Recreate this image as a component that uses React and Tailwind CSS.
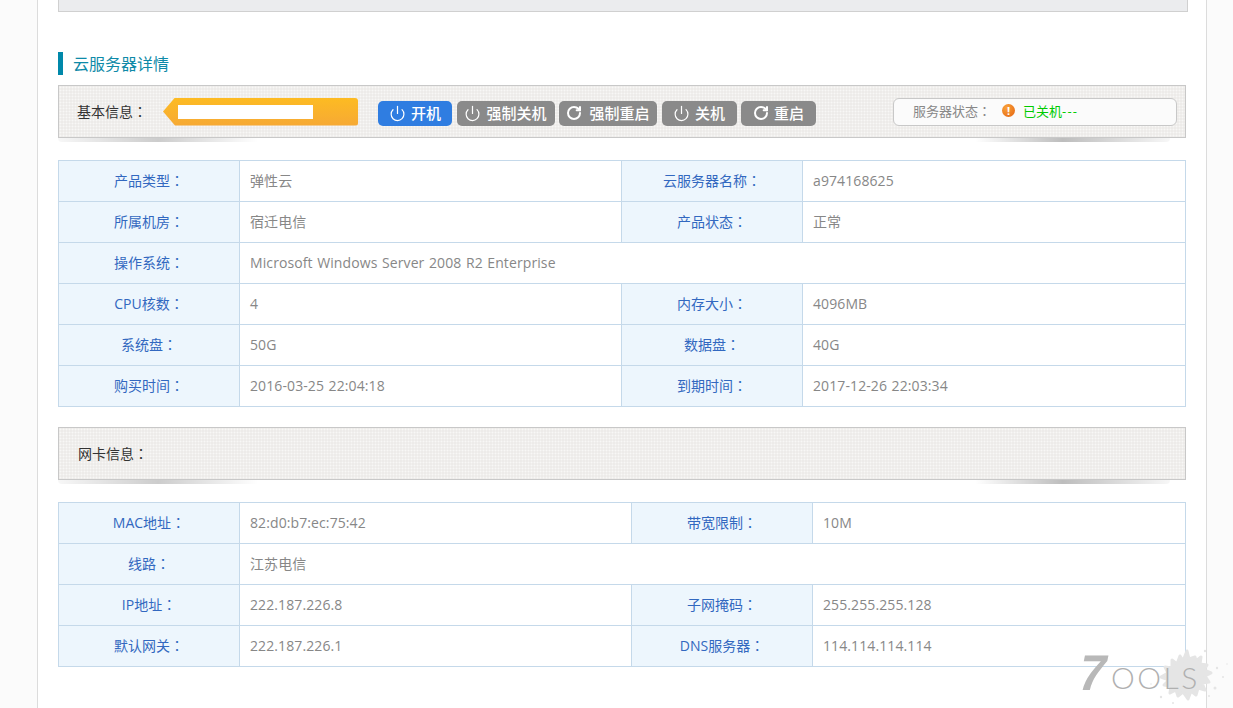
import React from 'react'
import { Power, RotateCw } from 'lucide-react'

const cjk = "font-['Open_Sans','Noto_Sans_CJK_SC',sans-serif]"
const paper = "border border-[#c8c8c8] bg-[#efedeb] bg-[image:radial-gradient(rgba(255,255,255,0.55)_0.8px,transparent_1.1px),radial-gradient(rgba(0,0,0,0.022)_0.8px,transparent_1.1px)] bg-[length:3px_3px] [background-position:0_0,1.5px_1.5px]"

const buttons = [
  { label: '开机', icon: 'power', active: true, width: 'w-[74px]', gap: 'gap-[5px]' },
  { label: '强制关机', icon: 'power', width: 'w-[98px]', gap: 'gap-[5px]' },
  { label: '强制重启', icon: 'restart', width: 'w-[98px]', gap: 'gap-[7px]' },
  { label: '关机', icon: 'power', width: 'w-[75px]', gap: 'gap-[5px]' },
  { label: '重启', icon: 'restart', width: 'w-[75px]', gap: 'gap-[5px]' },
]

// colon sits centred in the em box in the original, the TC face has that form
const Colon = () => <span className="font-['Noto_Sans_CJK_TC',sans-serif]">：</span>

const Shadow = () => (
  <div className="flex justify-between h-[7px]">
    <div className="w-[200px] h-[4px] rounded-bl-full bg-[linear-gradient(90deg,rgba(0,0,0,0.03),rgba(0,0,0,0.2)_50%,rgba(0,0,0,0))]"></div>
    <div className="w-[195px] h-[4px] mr-[16px] rounded-br-full bg-[linear-gradient(90deg,rgba(0,0,0,0),rgba(0,0,0,0.26)_45%,rgba(0,0,0,0.03))]"></div>
  </div>
)

const Label = ({ w, children }) => (
  <td className={`${w} border border-[#c5d9ea] bg-[#edf6fd] pb-[2px] text-center text-[#3268c0]`}>{children}<Colon /></td>
)
const Value = ({ w, span, children }) => (
  <td colSpan={span} className={`${w || ''} border border-[#c5d9ea] pb-[2px] pl-[10px] tracking-[0.1px] [word-spacing:0.8px] text-[#878787]`}>{children}</td>
)

const InfoTable = ({ rows, w3 }) => (
  <table className="w-[1128px] table-fixed border-collapse text-[14px]">
    <tbody>
      {rows.map((row, i) => (
        <tr key={i} className="h-[41px]">
          <Label w="w-[181px]">{row[0]}</Label>
          {row.length === 2 ? (
            <Value span={3}>{row[1]}</Value>
          ) : (
            <>
              <Value w={w3}>{row[1]}</Value>
              <Label w="w-[181px]">{row[2]}</Label>
              <Value>{row[3]}</Value>
            </>
          )}
        </tr>
      ))}
    </tbody>
  </table>
)

const detailRows = [
  ['产品类型', '弹性云', '云服务器名称', 'a974168625'],
  ['所属机房', '宿迁电信', '产品状态', '正常'],
  ['操作系统', 'Microsoft Windows Server 2008 R2 Enterprise'],
  ['CPU核数', '4', '内存大小', '4096MB'],
  ['系统盘', '50G', '数据盘', '40G'],
  ['购买时间', '2016-03-25 22:04:18', '到期时间', '2017-12-26 22:03:34'],
]

const nicRows = [
  ['MAC地址', '82:d0:b7:ec:75:42', '带宽限制', '10M'],
  ['线路', '江苏电信'],
  ['IP地址', '222.187.226.8', '子网掩码', '255.255.255.128'],
  ['默认网关', '222.187.226.1', 'DNS服务器', '114.114.114.114'],
]

const Watermark = () => (
  <div className="absolute left-[1078px] top-[646px] w-[155px] h-[62px] pointer-events-none">
    <svg className="absolute left-[65px] top-0" width="90" height="62" viewBox="0 0 90 62" fill="#e5e5e5" stroke="#e5e5e5" strokeWidth="3" strokeLinejoin="round">
      <path d="M44 5 L46 13 L52 11 L53 15 L58 11 L57 18 L64 19 L61 24 L68 27 L62 30 L66 36 L59 37 L62 44 L55 42 L53 49 L48 45 L45 53 L40 46 L35 50 L33 44 L27 47 L28 40 L21 39 L26 34 L18 31 L25 27 L22 21 L29 22 L29 14 L34 18 L37 10 L40 15 Z" />
      <g stroke="none">
        <circle cx="74" cy="22" r="1.2" /><circle cx="80" cy="31" r="1" /><circle cx="72" cy="42" r="1.5" /><circle cx="18" cy="51" r="1.2" /><circle cx="11" cy="24" r="1" /><circle cx="62" cy="5" r="1.2" /><circle cx="30" cy="57" r="1" /><circle cx="66" cy="50" r="1" /><circle cx="8" cy="38" r="0.8" /><circle cx="84" cy="18" r="0.8" />
      </g>
    </svg>
    <span className="absolute left-[1px] top-[-3px] -skew-x-12 font-['Liberation_Sans',sans-serif] font-bold text-[#b8b8b8] text-[50px] leading-[60px]">7</span>
    <span className="absolute left-[33px] top-[9px] font-['Lato',sans-serif] font-light text-[#b0b0b0] text-[30px] leading-[44px] tracking-[2.5px]">OOLS</span>
  </div>
)

const App = () => {
  return (
    <div className={`${cjk} relative h-[708px] overflow-hidden bg-[#fbfbfb]`}>
      <div className="ml-[37px] w-[1170px] h-full border-x border-[#dcdcdc] bg-white pl-[20px]">
        <div className="w-[1130px] h-[12px] border border-t-0 border-[#d0d0d0] bg-[#ebecee]"></div>

        <div className="mt-[40px] h-[23px] border-l-[5px] border-[#0088aa] pl-[10px] text-[16px] leading-[25px] text-[#0e8aa8]">云服务器详情</div>

        <div className="mt-[10px] w-[1128px]">
          <div className={`${paper} h-[53px] flex items-center pl-[18px]`}>
            <span className="w-[85px] text-[14px] text-[#333]">基本信息<Colon /></span>
            <div className="relative ml-[1px] w-[195px] h-[28px] bg-[linear-gradient(#fdbb22,#f6a935)] [clip-path:polygon(12px_0,100%_0,100%_100%,12px_100%,0_50%)] rounded-r-[3px]">
              <div className="absolute left-[15px] top-[7px] w-[135px] h-[14px] bg-white"></div>
            </div>
            <div className="ml-[20px] mt-[3px] flex gap-[4.5px]">
              {buttons.map((b) => (
                <button key={b.label} className={`${b.width} ${b.gap} h-[25px] rounded-[5px] flex items-center justify-center text-[15px] font-medium text-white ${b.active ? 'bg-[#2f7de1]' : 'bg-[#8a8a8a]'}`}>
                  {b.icon === 'power' ? <Power size={17} strokeWidth={1.7} /> : <RotateCw size={16} strokeWidth={3} />}
                  {b.label}
                </button>
              ))}
            </div>
            <div className="ml-[77px] w-[284px] h-[28px] rounded-[6px] border border-[#c8c8c8] bg-[#fbfbfb] flex items-center pl-[19px] text-[13px]">
              <span className="text-[#888]">服务器状态<Colon /></span>
              <span className="ml-[11px] mb-[3px] w-[13px] h-[13px] rounded-full bg-[radial-gradient(circle_at_35%_30%,#f9a33a,#e4610f)] text-white text-[11px] font-bold leading-[13px] text-center">!</span>
              <span className="ml-[8px] text-[#00cc00]">已关机<span className="tracking-[1.2px]">---</span></span>
            </div>
          </div>
          <Shadow />
        </div>

        <div className="mt-[15px]">
          <InfoTable rows={detailRows} w3="w-[382px]" />
        </div>

        <div className="mt-[20px] w-[1128px]">
          <div className={`${paper} h-[53px] flex items-center pl-[19px] text-[14px] text-[#333]`}>网卡信息<Colon /></div>
          <Shadow />
        </div>

        <div className="mt-[15px]">
          <InfoTable rows={nicRows} w3="w-[392px]" />
        </div>
      </div>
      <Watermark />
    </div>
  )
}

export default App
